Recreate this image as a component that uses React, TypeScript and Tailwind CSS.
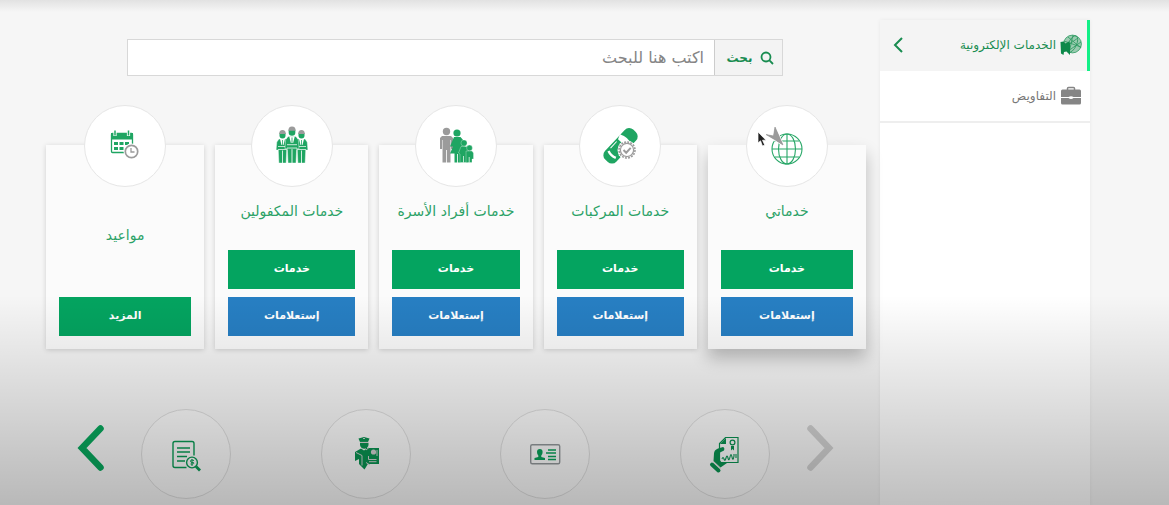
import type { ReactNode } from "react";

function GlobePlaneIcon() {
  return (
    <svg viewBox="0 0 60 60" className="h-[60px] w-[60px]" fill="none" aria-hidden="true">
      <g stroke="#27a767" strokeWidth="1.100">
        <circle cx="30" cy="33" r="15" />
        <ellipse cx="30" cy="33" rx="8.500" ry="15" />
        <path d="M30 18v30M15 33h30M18 25h24M18 41h24" />
      </g>
      <path d="M9 18.500L16.500 20 18 11 26 29 17.500 23.500z" fill="#9b9b9b" stroke="#fff" strokeWidth="2.200" paintOrder="stroke" />
      <path d="M9 18.500L16.500 20 18 11 26 29 17.500 23.500z" fill="#9b9b9b" stroke="#9b9b9b" strokeWidth=".6" />
    </svg>
  );
}

function VehicleIcon() {
  return (
    <svg viewBox="0 0 60 60" className="h-[60px] w-[60px]" fill="none" aria-hidden="true">
      <g transform="rotate(43 30 30)">
        <rect x="22.500" y="9" width="15.500" height="41" rx="6" fill="#1fa562" />
        <path d="M22 21.500q8-4 16.500 0l-2 5h-12.500z" fill="#fff" />
        <path d="M24.500 29v9M36 29v9" stroke="#fff" strokeWidth="1" />
        <path d="M25 41.500q5 2 10 0" stroke="#fff" strokeWidth="2.400" />
      </g>
      <circle cx="37" cy="34" r="9.500" fill="#fff" />
      <circle cx="37" cy="34" r="8" stroke="#9b9b9b" strokeWidth="1.600" strokeDasharray="2 1.140" />
      <circle cx="37" cy="34" r="6.600" stroke="#9b9b9b" strokeWidth="1.200" />
      <path d="M33.500 34l2.700 2.700 4.500-4.800" stroke="#9b9b9b" strokeWidth="2" />
    </svg>
  );
}

function FamilyIcon() {
  return (
    <svg viewBox="0 0 60 60" className="h-[60px] w-[60px]" aria-hidden="true">
      <g fill="#9b9b9b">
        <circle cx="20.500" cy="15.500" r="3.700" />
        <path d="M16 20h9l2 2v11h-2v-9h-.5v22.500h-3.600V34h-.8v12.500h-3.600V24H16v9h-2V22z" />
      </g>
      <g fill="#1fa562">
        <circle cx="31" cy="17" r="3.600" />
        <path d="M28 21h6.500l3 3.500 1.500 7-2 2 .5 4h-3v9h-2.600V38h-.8v8.500h-2.600v-9h-4.500l3-7h-3z" />
        <g stroke="#fff" strokeWidth=".3">
          <circle cx="38" cy="27" r="3.100" />
          <path d="M35 30.500h6l2.500 7-1.500 1v8h-8V38L32.500 37z" />
          <circle cx="43.500" cy="32" r="2.900" />
          <path d="M40 35h6l1.500 2v6H46v3.500h-6z" />
        </g>
      </g>
      <path d="M37.500 40v6.500M43.200 41v5.500" stroke="#fff" strokeWidth=".7" />
    </svg>
  );
}

function Worker({ x, y }: { x: number; y: number }) {
  return (
    <g transform={`translate(${x} ${y})`}>
      <path d="M-3.500 8h7l2.200 3 .7 8h-2.200l-.6 13h-7.200l-.6-13h-2.200l.7-8z" fill="#1fa562" stroke="#fff" strokeWidth=".4" />
      <path d="M-2.500 8L-1 14h2L2.500 8z" fill="#fff" />
      <path d="M0 9v5" stroke="#1fa562" strokeWidth=".8" />
      <path d="M0 19.500v12.500" stroke="#fff" strokeWidth=".8" />
      <path d="M-4.500 15.500h9M-4.500 18.500h9" stroke="#fff" strokeWidth=".7" />
      <path d="M-3 2h6v2.500a3 3 0 0 1-6 0z" fill="#1fa562" />
      <path d="M-3.300 3a3.300 4 0 0 1 6.600 0z" fill="#9b9b9b" />
    </g>
  );
}

function WorkersIcon() {
  return (
    <svg viewBox="0 0 60 60" className="h-[60px] w-[60px]" aria-hidden="true">
      <Worker x={20.5} y={15} />
      <Worker x={39.5} y={15} />
      <g transform="translate(30 11.500) scale(1.110)">
        <Worker x={0} y={0} />
      </g>
    </svg>
  );
}

function CalendarIcon() {
  return (
    <svg viewBox="0 0 60 60" className="h-[60px] w-[60px]" fill="none" aria-hidden="true">
      <g transform="translate(-1 -1)">
        <rect x="17.500" y="18.500" width="21" height="19" rx="1" stroke="#1fa562" strokeWidth="1.300" />
        <path d="M17 18h22v6.500H17z" fill="#1fa562" />
        <path d="M21 16v5M34.500 16v5" stroke="#fff" strokeWidth="3.200" />
        <path d="M21 15.500v5M34.500 15.500v5" stroke="#1fa562" strokeWidth="1.500" />
        <path d="M20 27h4v3h-4zM25.500 27h4v3h-4zM31 27h4v3h-4zM20 32h4v3h-4zM25.500 32h4v3h-4z" fill="#1fa562" />
        <circle cx="37.500" cy="36.500" r="8" fill="#fff" />
        <circle cx="37.500" cy="36.500" r="6.200" stroke="#9b9b9b" strokeWidth="1.700" />
        <path d="M37 33v4h3.500" stroke="#9b9b9b" strokeWidth="1.300" />
      </g>
    </svg>
  );
}

function CertificateIcon() {
  return (
    <svg viewBox="0 0 40 40" className="h-10 w-10" fill="none" aria-hidden="true">
      <path d="M20.500 3.500H33v25H14.500V9.500z" stroke="#099150" strokeWidth="1.200" />
      <path d="M21 4v6h-6z" fill="#099150" />
      <circle cx="27.500" cy="8.500" r="2.400" stroke="#099150" strokeWidth="1.200" />
      <path d="M26 12h3v4.500L27.500 15 26 16.500z" fill="#099150" />
      <path d="M17 25q1-3 2 0t2-1 2 0 2-1 2 0 2-1v-2m2 4v-4" stroke="#099150" strokeWidth="1.100" />
      <path d="M18 13l-5 1.500q-4 1.500-4 5L8.500 27l7 6.500L22 29h-5l-3-4v-6l5-2.500q1-3-1-3.500z" fill="#099150" />
      <path d="M7 30.500l6.500 6" stroke="#099150" strokeWidth="4" strokeLinecap="round" />
      <path d="M8 27.500l7.500 7" stroke="#cacaca" strokeWidth=".7" />
    </svg>
  );
}

function IdCardIcon() {
  return (
    <svg viewBox="0 0 40 40" className="h-10 w-10" fill="none" aria-hidden="true">
      <rect x="5.700" y="10.700" width="29" height="19" rx="1.500" stroke="#92979a" strokeWidth="1.400" />
      <path d="M12 18a2.800 3 0 0 1 5.600 0q0 2-1.300 3.500v1.500l3.700 1V26H9.500v-2l3.800-1v-1.500Q12 20 12 18z" fill="#09a058" />
      <path d="M23 16h8M21 19h10M23 22.500h8M23 25.500h8" stroke="#09a058" strokeWidth="1.300" />
    </svg>
  );
}

function OfficerIcon() {
  return (
    <svg viewBox="0 0 40 40" className="h-10 w-10" fill="none" aria-hidden="true">
      <g fill="#099150">
        <path d="M12.500 4.500l5.500-1.500 5.500 1.500-1.500 3.500h-8z" />
        <path d="M14 9h8.500v1.500a4.200 4.300 0 0 1-8.500 0z" />
        <path d="M9 18l6-3.500 3 2 3-2 4 3-1 9-5.500 9-5.500-5.500V25L9 27z" />
        <path d="M20 14h13v16H20v-6z" />
      </g>
      <path d="M17 4.500h2M14 8.400h8.500M10 18.500l6 3v10" stroke="#cfcfcf" strokeWidth="1" />
      <circle cx="27.500" cy="18" r="2.600" fill="#cfcfcf" />
      <path d="M31 16v6M22.500 22v3.500h8M23 27.700h7.500M20 16l3-2.500M24 31l-4-2.500" stroke="#cfcfcf" strokeWidth="1" />
    </svg>
  );
}

function InvoiceSearchIcon() {
  return (
    <svg viewBox="0 0 40 40" className="h-10 w-10" fill="none" aria-hidden="true">
      <g stroke="#099a54" strokeWidth="1.400">
        <path d="M20.500 33.500H9a2 2 0 0 1-2-2v-22a2 2 0 0 1 2-2h17a2 2 0 0 1 2 2v12" />
        <path d="M11 14h13M11 18h13M11 22.500h10M11 27h8" />
        <circle cx="26" cy="28.500" r="5.400" />
        <path d="M28 26.500q-3.500-1.500-3.500.5t3 1.500q1 2-3 1.500M26 25v7" strokeWidth="1" />
        <path d="M30 32.500l4 4" strokeWidth="2.800" />
      </g>
    </svg>
  );
}

function GlobeBookIcon() {
  return (
    <svg viewBox="0 0 22 22" className="h-[22px] w-[22px] shrink-0" fill="none" aria-hidden="true">
      <circle cx="12.500" cy="10" r="9" fill="#9acbb0" />
      <g stroke="#2b9960" strokeWidth=".8">
        <circle cx="12.500" cy="10" r="8.900" />
        <ellipse cx="12.500" cy="10" rx="4" ry="8.800" transform="rotate(25 12.500 10)" />
        <path d="M4 7l17 6M5 13l13-9M8 17l13-9M8 3l13 11M13 1l-4 18" />
      </g>
      <path d="M.5 8l3-.5 2 2 3.500-2 1 2V21l-3.500-3.500-2.500.5-.5 3-2.500-1.500z" fill="#0d894a" />
    </svg>
  );
}

function BriefcaseIcon() {
  return (
    <svg viewBox="0 0 22 22" className="h-[22px] w-[22px] shrink-0" fill="none" aria-hidden="true">
      <path d="M7.500 5V3.500q0-1 1-1h5q1 0 1 1V5" stroke="#858585" strokeWidth="1.500" />
      <path d="M2.500 4.500h17q1.500 0 1.500 1.500v6h-7.500q-2.500-1.500-5 0H1V6q0-1.500 1.500-1.500zM1 13h7.500q2.500 2 5 0H21v5q0 1.500-1.500 1.500h-17Q1 19.500 1 18z" fill="#858585" />
    </svg>
  );
}

function Chevron({ flip = false }: { flip?: boolean }) {
  return (
    <svg viewBox="0 0 28 48" className="h-12 w-7" fill="none" aria-hidden="true">
      <path
        d={flip ? "M4.500 4.500L23 24 4.500 43.500" : "M23.500 4.500L5 24l18.500 19.500"}
        stroke="currentColor"
        strokeWidth="6.500"
        strokeLinecap="round"
      />
    </svg>
  );
}

type Service = { title: string; icon: ReactNode; actions: string[]; active?: boolean };

const services: Service[] = [
  { title: "خدماتي", icon: <GlobePlaneIcon />, actions: ["خدمات", "إستعلامات"], active: true },
  { title: "خدمات المركبات", icon: <VehicleIcon />, actions: ["خدمات", "إستعلامات"] },
  { title: "خدمات أفراد الأسرة", icon: <FamilyIcon />, actions: ["خدمات", "إستعلامات"] },
  { title: "خدمات المكفولين", icon: <WorkersIcon />, actions: ["خدمات", "إستعلامات"] },
  { title: "مواعيد", icon: <CalendarIcon />, actions: ["المزيد"] },
];

function ServiceCard({ title, icon, actions, active }: Service) {
  const shadow = active ? "shadow-[0_9px_16px_rgba(0,0,0,0.24)]" : "shadow-[0_1px_5px_rgba(0,0,0,0.16)]";
  const titleTop = actions.length > 1 ? "mt-3" : "mt-9";
  return (
    <article className={`flex h-[204px] flex-col bg-[#fbfbfb] px-[13px] pb-[13px] ${shadow}`}>
      <div className="-mt-10 flex h-[82px] w-[82px] shrink-0 items-center justify-center self-center rounded-full border border-[#e6e6e6] bg-white">
        {icon}
      </div>
      <h2 className={`whitespace-nowrap text-center text-[14px] leading-6 text-[#2ba267] ${titleTop}`}>{title}</h2>
      <div className="mt-auto flex flex-col gap-2">
        {actions.map((action) => (
          <button
            key={action}
            type="button"
            className={`h-[39px] w-full text-[11px] font-bold text-white ${action === "إستعلامات" ? "bg-[#277fc3]" : "bg-[#04a460]"}`}
          >
            {action}
          </button>
        ))}
      </div>
    </article>
  );
}

const shortcuts = [
  { label: "تفاويض", icon: <CertificateIcon /> },
  { label: "الهوية", icon: <IdCardIcon /> },
  { label: "الجوازات", icon: <OfficerIcon /> },
  { label: "المدفوعات", icon: <InvoiceSearchIcon /> },
];

export default function App() {
  return (
    <div
      dir="rtl"
      className="relative flex min-h-screen gap-[14px] overflow-hidden bg-[#f6f6f6] pl-[46px] pr-[79px] font-['DejaVu_Sans',sans-serif]"
    >
      <div className="pointer-events-none absolute inset-x-0 top-0 h-3 bg-linear-to-b from-[#e2e2e2] to-[#f6f6f6]" />

      <aside className="mt-5 w-[210px] shrink-0 bg-white shadow-[0_0_4px_rgba(0,0,0,0.06)]">
        <nav>
          <a href="#services" className="flex h-[51px] items-center gap-1 border-r-[3px] border-[#12f087] bg-[#f4f4f4] pb-0.5 pl-3 pr-[5px] text-[#188c50]">
            <GlobeBookIcon />
            <span className="text-[12px]">الخدمات الإلكترونية</span>
            <svg viewBox="0 0 12 16" className="mr-auto h-4 w-3" fill="none" aria-hidden="true">
              <path d="M10 1L3 8l7 7" stroke="currentColor" strokeWidth="2" />
            </svg>
          </a>
          <a href="#delegations" className="flex h-[52px] items-center gap-1 border-b-2 border-[#eeeeee] pr-2 text-[#777777]">
            <BriefcaseIcon />
            <span className="text-[12px]">التفاويض</span>
          </a>
        </nav>
      </aside>

      <main className="min-w-0 flex-1 pb-1.5 pt-[39px]">
        <form className="ml-[81px] mr-[83px] flex h-[37px] border border-[#d8d8d8]" onSubmit={(event) => event.preventDefault()}>
          <button type="submit" className="flex w-[67px] shrink-0 items-center justify-center gap-2 bg-[#f3f3f3] pl-1 text-[12px] font-bold text-[#188c50]">
            <svg viewBox="0 0 14 14" className="h-[14px] w-[14px]" fill="none" stroke="currentColor" strokeWidth="1.800" aria-hidden="true">
              <circle cx="6" cy="6" r="4.500" />
              <path d="M9.200 9.200l3.800 3.800" />
            </svg>
            بحث
          </button>
          <input
            type="search"
            aria-label="بحث"
            placeholder="اكتب هنا للبحث"
            className="min-w-0 flex-1 border-r border-[#cccccc] bg-white px-2.5 text-[16px] outline-none placeholder:text-[#858585]"
          />
        </form>

        <section className="relative mt-[69px] grid grid-cols-[158fr_153fr_153fr_153fr_158fr] gap-[11px]">
          {services.map((service) => (
            <ServiceCard key={service.title} {...service} />
          ))}
          <svg viewBox="0 0 12 16" className="absolute -top-[14px] right-[98px] h-4 w-3" aria-hidden="true">
            <path d="M2 1v11l2.500-2.200L6.500 15l2.200-1-2.200-4.800H10z" fill="#222" stroke="#fff" strokeWidth=".7" />
          </svg>
        </section>

        <section className="mt-[60px] flex items-start justify-between gap-9 pl-[31px] pr-8">
          <button type="button" aria-label="السابق" className="mt-[15px] text-[#d0d0d0]">
            <Chevron flip />
          </button>
          <ul className="flex flex-1 justify-between">
            {shortcuts.map(({ label, icon }) => (
              <li key={label}>
                <a href="#shortcut" aria-label={label} className="flex h-[90px] w-[90px] items-center justify-center rounded-full border border-[#dcdcdc] bg-[#f9f9f9]">
                  {icon}
                </a>
              </li>
            ))}
          </ul>
          <button type="button" aria-label="التالي" className="mt-[15px] text-[#08a65c]">
            <Chevron />
          </button>
        </section>
      </main>

      <div className="pointer-events-none absolute inset-x-0 bottom-0 h-[210px] bg-linear-to-b from-transparent to-black/25" />
    </div>
  );
}
